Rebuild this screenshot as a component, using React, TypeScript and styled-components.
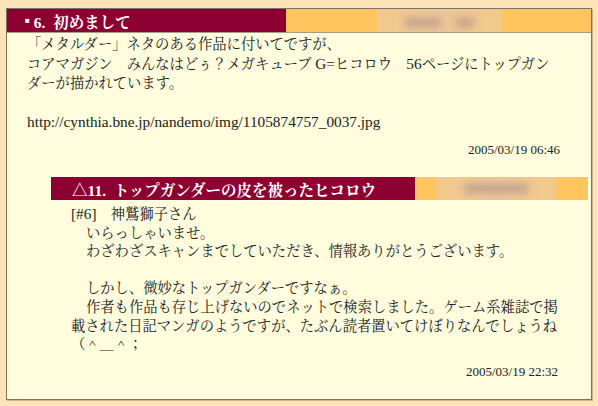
import React from "react";
import styled, { createGlobalStyle } from "styled-components";

const GlobalStyle = createGlobalStyle`
  body {
    margin: 0;
    background: #fde3b8;
    font-family: "Liberation Serif", "Noto Serif CJK JP", "Noto Sans CJK JP", serif;
    color: #222;
  }
`;

const Panel = styled.div`
  margin: 8px 6px 9px 6px;
  border: 1px solid #7a7468;
  background: #fffddd;
  box-shadow: 1px 1px 0 #c9b48e;
  padding-bottom: 18px;
`;

const Bar = styled.div`
  display: flex;
  height: 23px;
  border-bottom: 1px solid #a49c8c;
`;

const BarTitle = styled.div<{ width: number }>`
  width: ${(p) => p.width}px;
  background: #8b0031;
  color: #fff;
  font-size: 15.5px;
  font-weight: bold;
  display: flex;
  align-items: center;
  padding-left: ${(p) => (p.width > 300 ? 21 : 18)}px;
  box-sizing: border-box;
  white-space: nowrap;
`;

const Mark = styled.span`
  font-size: 8px;
  margin-right: 4px;
`;

const BarSide = styled.div<{ offset: number }>`
  flex: 1;
  background: #ffc660;
  display: flex;
  padding-left: ${(p) => p.offset}px;
`;

const Blurred = styled.div<{ width: number }>`
  width: ${(p) => p.width}px;
  height: 100%;
  background: linear-gradient(to right, #f3c98a, #ecc79a 50%, #f3c98a);
  overflow: hidden;
  display: flex;
  align-items: center;
  justify-content: center;
  span {
    color: #a88c86;
    font-size: 15px;
    filter: blur(4px);
    white-space: nowrap;
  }
`;

const Body = styled.div`
  padding: 2px 31px 0 20px;
  font-size: 14.3px;
  line-height: 19px;
`;

const Latin = styled.span`
  font-size: 15.3px;
`;

const DateLine = styled.div`
  text-align: right;
  font-size: 13px;
  line-height: 19px;
  margin-top: 8px;
`;

const Reply = styled.div`
  margin: 18px 3px 0 44px;
  background: #fffddd;
`;

const ReplyBar = styled(Bar)`
  border-bottom: none;
  box-shadow: inset 0 -1px 0 #ffe2a8;
`;

const ReplyBody = styled.div`
  padding: 5px 30px 0 20px;
  font-size: 14.3px;
  line-height: 18.6px;
`;

const Line = styled.div<{ indent?: boolean }>`
  min-height: 18.6px;
  padding-left: ${(p) => (p.indent ? "15px" : "0")};
  white-space: nowrap;
`;

export default function App() {
  return (
    <>
      <GlobalStyle />
      <Panel>
        <Bar>
          <BarTitle width={279}>
            <Mark>■</Mark>6.&nbsp;&nbsp;初めまして
          </BarTitle>
          <BarSide offset={91}>
            <Blurred width={125}>
              <span>■■■■　■■</span>
            </Blurred>
          </BarSide>
        </Bar>
        <Body>
          「メタルダー」ネタのある作品に付いてですが、
          <br />
          コアマガジン　みんなはどぅ？メガキューブ <Latin>G=</Latin>ヒコロウ　<Latin>56</Latin>ページにトップガン
          <br />
          ダーが描かれています。
          <br />
          <br />
          <Latin>http://cynthia.bne.jp/nandemo/img/1105874757_0037.jpg</Latin>
          <DateLine>2005/03/19 06:46</DateLine>
        </Body>
        <Reply>
          <ReplyBar>
            <BarTitle width={364}>△11.&nbsp;&nbsp;トップガンダーの皮を被ったヒコロウ</BarTitle>
            <BarSide offset={21}>
              <Blurred width={120}>
                <span>■■■■■■■</span>
              </Blurred>
            </BarSide>
          </ReplyBar>
          <ReplyBody>
            <Line>
              <Latin>[#6]</Latin>　神鷲獅子さん
            </Line>
            <Line indent>いらっしゃいませ。</Line>
            <Line indent>わざわざスキャンまでしていただき、情報ありがとうございます。</Line>
            <Line />
            <Line indent>しかし、微妙なトップガンダーですなぁ。</Line>
            <Line indent>作者も作品も存じ上げないのでネットで検索しました。ゲーム系雑誌で掲</Line>
            <Line>載された日記マンガのようですが、たぶん読者置いてけぼりなんでしょうね</Line>
            <Line>（＾＿＾；</Line>
            <DateLine>2005/03/19 22:32</DateLine>
          </ReplyBody>
        </Reply>
      </Panel>
    </>
  );
}
